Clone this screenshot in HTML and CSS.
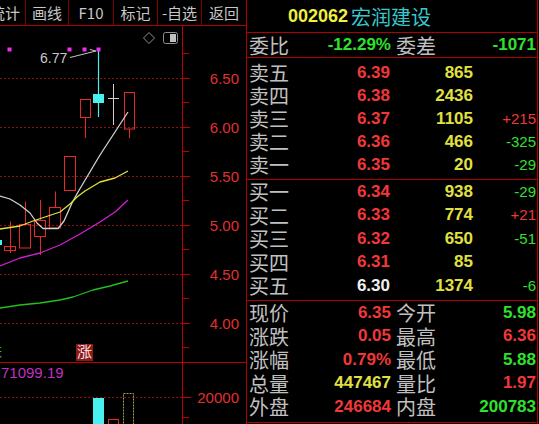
FILE: index.html
```html
<!DOCTYPE html>
<html>
<head>
<meta charset="utf-8">
<link rel="stylesheet" href="styles.css">
</head>
<body>
<div class="app">
  <div class="left">
    <div class="toolbar">
      <div class="btn first"><span>统计</span></div>
      <div class="btn w42">画线</div>
      <div class="btn w44">F10</div>
      <div class="btn w43">标记</div>
      <div class="btn w43">-自选</div>
      <div class="btn w44 last">返回</div>
    </div>
    <svg class="chart" width="246" height="398" viewBox="0 26 246 398">
      <g class="grid">
        <line x1="0" y1="78.5" x2="182" y2="78.5"/>
        <line x1="0" y1="127.5" x2="182" y2="127.5"/>
        <line x1="0" y1="176.5" x2="182" y2="176.5"/>
        <line x1="0" y1="225.5" x2="182" y2="225.5"/>
        <line x1="0" y1="274.5" x2="182" y2="274.5"/>
        <line x1="0" y1="323.5" x2="182" y2="323.5"/>
        <line x1="0" y1="397.5" x2="182" y2="397.5"/>
      </g>
      <g class="axis">
        <line x1="182.5" y1="26" x2="182.5" y2="424"/>
        <line x1="0" y1="362.5" x2="246" y2="362.5"/>
        <line x1="183" y1="53.5" x2="189" y2="53.5"/>
        <line x1="183" y1="78.5" x2="190" y2="78.5"/>
        <line x1="183" y1="102.5" x2="189" y2="102.5"/>
        <line x1="183" y1="127.5" x2="190" y2="127.5"/>
        <line x1="183" y1="151.5" x2="189" y2="151.5"/>
        <line x1="183" y1="176.5" x2="190" y2="176.5"/>
        <line x1="183" y1="200.5" x2="189" y2="200.5"/>
        <line x1="183" y1="225.5" x2="190" y2="225.5"/>
        <line x1="183" y1="249.5" x2="189" y2="249.5"/>
        <line x1="183" y1="274.5" x2="190" y2="274.5"/>
        <line x1="183" y1="298.5" x2="189" y2="298.5"/>
        <line x1="183" y1="323.5" x2="190" y2="323.5"/>
        <line x1="183" y1="347.5" x2="189" y2="347.5"/>
        <line x1="183" y1="397.5" x2="191" y2="397.5"/>
        <line x1="183" y1="417.5" x2="189" y2="417.5"/>
      </g>
      <g class="ax">
        <text x="239" y="84">6.50</text>
        <text x="239" y="133">6.00</text>
        <text x="239" y="182">5.50</text>
        <text x="239" y="231">5.00</text>
        <text x="239" y="280">4.50</text>
        <text x="239" y="329">4.00</text>
        <text x="239" y="403">20000</text>
      </g>
      <path class="ico" d="M149 32.5 L154.5 38 L149 43.5 L143.5 38 Z"/>
      <rect class="ico" x="163.5" y="32.5" width="14" height="11" rx="2"/>
      <rect class="icofill" x="170" y="34" width="6" height="8"/>
      <g class="up">
        <line x1="10.5" y1="221.5" x2="10.5" y2="253"/>
        <rect x="4.5" y="246.5" width="11" height="4"/>
        <line x1="25.5" y1="201.5" x2="25.5" y2="224.5"/>
        <rect x="19.5" y="224.5" width="11" height="23.5"/>
        <line x1="40.5" y1="200" x2="40.5" y2="220.5"/>
        <line x1="40.5" y1="236.5" x2="40.5" y2="255"/>
        <rect x="34.5" y="220.5" width="11" height="16"/>
        <line x1="55.5" y1="191.5" x2="55.5" y2="207.5"/>
        <rect x="49.5" y="207.5" width="11" height="20.5"/>
        <rect x="64.5" y="156.5" width="11" height="34"/>
        <line x1="85.5" y1="117.5" x2="85.5" y2="138"/>
        <rect x="80.5" y="99.5" width="10" height="18"/>
        <line x1="129.5" y1="129" x2="129.5" y2="138"/>
        <rect x="124.5" y="92.5" width="10" height="36.5"/>
      </g>
      <rect class="dn" x="0" y="240" width="2" height="5"/>
      <line class="dnl" x1="98.5" y1="49" x2="98.5" y2="117"/>
      <rect class="dn" x="93" y="94" width="11" height="9"/>
      <g class="doji">
        <line x1="113.5" y1="84" x2="113.5" y2="125"/>
        <line x1="108" y1="98.5" x2="119" y2="98.5"/>
      </g>
      <polyline class="ma1" points="0,196 10,199 20,205 30,213 37,223 43,228.5 58,228.5 64,221 72,203 78,192 100,155 128,112"/>
      <polyline class="ma2" points="0,229 20,226 33,221 48,216 60,212 70,204 77,197 85,191 100,182 115,178 128,171"/>
      <polyline class="ma3" points="0,266 20,258 40,253 60,245 80,234 100,222 115,212 128,200"/>
      <polyline class="ma4" points="0,308 20,305 40,303 60,300 73,297 93,290 110,286 128,281"/>
      <g class="dots">
        <rect x="7.5" y="47.5" width="4" height="4"/>
        <rect x="67.5" y="47.5" width="4" height="4"/>
        <rect x="82.5" y="47.5" width="4" height="4"/>
        <rect x="96.5" y="47.5" width="4" height="4"/>
      </g>
      <text class="hi" x="40" y="63">6.77</text>
      <g class="arrow">
        <line x1="70" y1="57.5" x2="96" y2="51"/>
        <line x1="96" y1="51" x2="90" y2="49.5"/>
      </g>
      <text class="mk-g" x="-12" y="356">跌</text>
      <rect class="mk-bg" x="76" y="344" width="17" height="17"/>
      <text class="mk-r" x="77" y="357">涨</text>
      <text class="vtxt" x="1" y="378">71099.19</text>
      <rect class="vdn" x="93" y="398" width="11" height="30"/>
      <rect class="vup" x="108.5" y="419.5" width="10" height="10"/>
      <rect class="vcur" x="123.5" y="393.5" width="10" height="35"/>
    </svg>
  </div>
  <div class="panel">
    <div class="head"><span class="code">002062</span><span class="name">宏润建设</span></div>
    <div class="g4 wb">
      <span class="lb">委比</span><span class="v g">-12.29%</span><span class="lb l2">委差</span><span class="v g">-1071</span>
    </div>
    <div class="sec sell">
      <div class="r5"><span class="lb">卖五</span><span class="p">6.39</span><span class="q">865</span><span class="c"></span></div>
      <div class="r5"><span class="lb">卖四</span><span class="p">6.38</span><span class="q">2436</span><span class="c"></span></div>
      <div class="r5"><span class="lb">卖三</span><span class="p">6.37</span><span class="q">1105</span><span class="c r">+215</span></div>
      <div class="r5"><span class="lb">卖二</span><span class="p">6.36</span><span class="q">466</span><span class="c g">-325</span></div>
      <div class="r5"><span class="lb">卖一</span><span class="p">6.35</span><span class="q">20</span><span class="c g">-29</span></div>
    </div>
    <div class="sec buy">
      <div class="r5"><span class="lb">买一</span><span class="p">6.34</span><span class="q">938</span><span class="c g">-29</span></div>
      <div class="r5"><span class="lb">买二</span><span class="p">6.33</span><span class="q">774</span><span class="c r">+21</span></div>
      <div class="r5"><span class="lb">买三</span><span class="p">6.32</span><span class="q">650</span><span class="c g">-51</span></div>
      <div class="r5"><span class="lb">买四</span><span class="p">6.31</span><span class="q">85</span><span class="c"></span></div>
      <div class="r5"><span class="lb">买五</span><span class="p w">6.30</span><span class="q">1374</span><span class="c g">-6</span></div>
    </div>
    <div class="sec info">
      <div class="g4"><span class="lb">现价</span><span class="v r">6.35</span><span class="lb l2">今开</span><span class="v g">5.98</span></div>
      <div class="g4"><span class="lb">涨跌</span><span class="v r">0.05</span><span class="lb l2">最高</span><span class="v r">6.36</span></div>
      <div class="g4"><span class="lb">涨幅</span><span class="v r">0.79%</span><span class="lb l2">最低</span><span class="v g">5.88</span></div>
      <div class="g4"><span class="lb">总量</span><span class="v y">447467</span><span class="lb l2">量比</span><span class="v r">1.97</span></div>
      <div class="g4"><span class="lb">外盘</span><span class="v r">246684</span><span class="lb l2">内盘</span><span class="v g">200783</span></div>
    </div>
  </div>
</div>
</body>
</html>
```

FILE: styles.css
```css
html, body {
  margin: 0;
  padding: 0;
  background: #000;
  width: 539px;
  height: 424px;
  overflow: hidden;
}

.app {
  display: flex;
  width: 539px;
  height: 424px;
  background: #000;
}

.left {
  width: 246px;
  display: flex;
  flex-direction: column;
}

.toolbar {
  display: flex;
  height: 25px;
  border-bottom: 1px solid #b00000;
}

.btn {
  height: 25px;
  line-height: 25px;
  border-right: 1px solid #800000;
  color: #c8c8c8;
  font-family: "Noto Sans CJK SC", sans-serif;
  font-size: 15px;
  text-align: center;
  white-space: nowrap;
  overflow: hidden;
}

.btn.first {
  width: 25px;
  display: flex;
  justify-content: flex-end;
}

.btn.first span {
  padding-right: 5px;
}

.w42 { width: 42px; }
.w43 { width: 43px; }
.w44 { width: 44px; }
.btn.last { border-right: none; }

.chart {
  display: block;
}

.grid line {
  stroke: #901010;
  stroke-width: 1;
  stroke-dasharray: 2 2;
}

.axis line {
  stroke: #c00000;
  stroke-width: 1;
}

.ax text {
  font-family: "Liberation Sans", sans-serif;
  font-size: 15px;
  fill: #e03030;
  text-anchor: end;
}

.ico {
  fill: none;
  stroke: #909090;
  stroke-width: 1;
}

.icofill {
  fill: #c0c0c0;
}

.up line, .up rect {
  stroke: #e82828;
  stroke-width: 1;
  fill: none;
}

.dn { fill: #48f0f0; }
.dnl { stroke: #48f0f0; stroke-width: 1.2; }

.doji line {
  stroke: #d0d0d0;
  stroke-width: 1;
}

.ma1, .ma2, .ma3, .ma4 {
  fill: none;
  stroke-width: 1.3;
  stroke-linejoin: round;
}
.ma1 { stroke: #d0d0d0; }
.ma2 { stroke: #e0e040; }
.ma3 { stroke: #d020d0; }
.ma4 { stroke: #20c020; }

.dots rect { fill: #f030f0; }

.hi {
  font-family: "Liberation Sans", sans-serif;
  font-size: 14px;
  fill: #c8c8c8;
}

.arrow line {
  stroke: #c8c8c8;
  stroke-width: 1;
}

.mk-g {
  font-family: "Noto Sans CJK SC", sans-serif;
  font-size: 14px;
  fill: #30c030;
}

.mk-bg { fill: #901818; }

.mk-r {
  font-family: "Noto Sans CJK SC", sans-serif;
  font-size: 15px;
  fill: #f0e0e0;
}

.vtxt {
  font-family: "Liberation Sans", sans-serif;
  font-size: 15px;
  fill: #c030c0;
}

.vdn { fill: #48f0f0; }
.vup { fill: none; stroke: #e82828; stroke-width: 1; }
.vcur { fill: none; stroke: #a0a040; stroke-width: 1; stroke-dasharray: 2 1; }

.panel {
  width: 290px;
  height: 424px;
  border-left: 1px solid #b00000;
  border-right: 1px solid #b00000;
  display: flex;
  flex-direction: column;
}

.head {
  height: 33px;
  box-sizing: border-box;
  border-bottom: 1px solid #b00000;
  display: flex;
  align-items: center;
  padding-left: 41px;
}

.code {
  font-family: "Liberation Sans", sans-serif;
  font-weight: bold;
  font-size: 18px;
  color: #f0f040;
}

.name {
  font-family: "Noto Sans CJK SC", sans-serif;
  font-size: 20px;
  color: #38c8cc;
  margin-left: 3px;
}

.sec {
  box-sizing: border-box;
  border-bottom: 1px solid #b00000;
}

.sell { height: 122px; padding-top: 3px; }
.buy { height: 121px; }
.info { height: 122px; }

.r5, .g4 {
  display: grid;
  height: 23.5px;
  align-items: center;
  padding-left: 2px;
}

.sell .r5 { height: 23px; }

.r5 { grid-template-columns: 41px 100px 83px 63px; }
.g4 { grid-template-columns: 41px 101px 45px 100px; }

.wb {
  height: 25px;
  box-sizing: border-box;
  border-bottom: 1px solid #b00000;
}

.lb {
  font-family: "Noto Sans CJK SC", sans-serif;
  font-size: 20px;
  line-height: 23px;
  color: #c0c0c0;
  white-space: nowrap;
}

.l2 { padding-left: 5px; }

.p, .q, .v {
  font-family: "Liberation Sans", sans-serif;
  font-weight: bold;
  font-size: 17px;
  line-height: 20px;
  text-align: right;
  white-space: nowrap;
}

.p { color: #f03838; }
.p.w { color: #f0f0f0; }
.q { color: #e0e040; }

.c {
  font-family: "Liberation Sans", sans-serif;
  font-size: 15px;
  line-height: 18px;
  text-align: right;
  white-space: nowrap;
}

.r { color: #f03838; }
.g { color: #30e030; }
.y { color: #e0e040; }
```
